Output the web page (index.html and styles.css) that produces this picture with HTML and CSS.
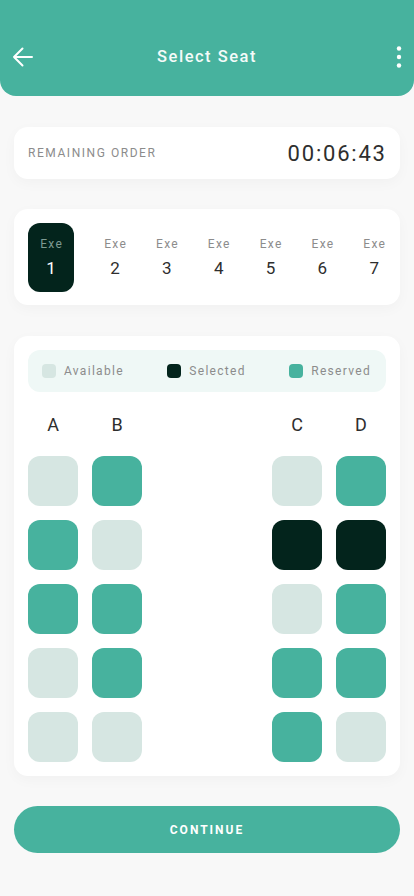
FILE: index.html
```html
<!DOCTYPE html>
<html>
<head>
<meta charset="utf-8">
<link rel="stylesheet" href="styles.css">
</head>
<body>
<div class="app">
  <header class="topbar">
    <svg class="back" width="22" height="22" viewBox="0 0 22 22"><path d="M20 11H2M10.5 2.5L2 11l8.5 8.5" fill="none" stroke="#fff" stroke-width="2" stroke-linecap="round" stroke-linejoin="round"/></svg>
    <h1 class="title">Select Seat</h1>
    <svg class="more" width="6" height="22" viewBox="0 0 6 22"><circle cx="3" cy="2.5" r="2.2" fill="#fff"/><circle cx="3" cy="11" r="2.2" fill="#fff"/><circle cx="3" cy="19.5" r="2.2" fill="#fff"/></svg>
  </header>

  <main class="content">
    <section class="card timer-card">
      <span class="timer-label">REMAINING ORDER</span>
      <span class="timer">00:06:43</span>
    </section>

    <section class="card carriages">
      <div class="car active"><span class="car-label">Exe</span><span class="car-num">1</span></div>
      <div class="car"><span class="car-label">Exe</span><span class="car-num">2</span></div>
      <div class="car"><span class="car-label">Exe</span><span class="car-num">3</span></div>
      <div class="car"><span class="car-label">Exe</span><span class="car-num">4</span></div>
      <div class="car"><span class="car-label">Exe</span><span class="car-num">5</span></div>
      <div class="car"><span class="car-label">Exe</span><span class="car-num">6</span></div>
      <div class="car"><span class="car-label">Exe</span><span class="car-num">7</span></div>
    </section>

    <section class="card seats-card">
      <div class="legend">
        <div class="legend-item"><span class="dot available"></span>Available</div>
        <div class="legend-item"><span class="dot selected"></span>Selected</div>
        <div class="legend-item"><span class="dot reserved"></span>Reserved</div>
      </div>
      <div class="grid">
        <div class="col-label">A</div><div class="col-label">B</div><div></div><div class="col-label">C</div><div class="col-label">D</div>

        <div class="seat available"></div><div class="seat reserved"></div><div></div><div class="seat available"></div><div class="seat reserved"></div>
        <div class="seat reserved"></div><div class="seat available"></div><div></div><div class="seat selected"></div><div class="seat selected"></div>
        <div class="seat reserved"></div><div class="seat reserved"></div><div></div><div class="seat available"></div><div class="seat reserved"></div>
        <div class="seat available"></div><div class="seat reserved"></div><div></div><div class="seat reserved"></div><div class="seat reserved"></div>
        <div class="seat available"></div><div class="seat available"></div><div></div><div class="seat reserved"></div><div class="seat available"></div>
      </div>
    </section>

    <button class="continue">CONTINUE</button>
  </main>
</div>
</body>
</html>
```

FILE: styles.css
```css
* { box-sizing: border-box; }
html, body { margin: 0; padding: 0; }
body {
  background: #f8f8f8;
  font-family: Roboto, "Liberation Sans", sans-serif;
  color: #333;
  width: 414px;
  height: 896px;
  overflow: hidden;
}
.topbar {
  height: 96px;
  background: #47b29e;
  border-radius: 0 0 16px 16px;
  display: flex;
  align-items: center;
  justify-content: space-between;
  padding: 18px 13px 0 12px;
  position: relative;
}
.back { display: block; }
.more { display: block; margin-right: -1px; }
.title {
  margin: 0;
  font-size: 16.5px;
  font-weight: 500;
  color: #f4fbf9;
  letter-spacing: 1.5px;
  position: absolute;
  left: 0; right: 0;
  top: 47px;
  text-align: center;
  line-height: 20px;
  pointer-events: none;
}
.content {
  padding: 31px 14px 0;
  display: flex;
  flex-direction: column;
}
.card {
  background: #fff;
  border-radius: 14px;
  box-shadow: 0 4px 14px rgba(0,0,0,0.03);
}
.timer-card {
  height: 52px;
  display: flex;
  align-items: center;
  justify-content: space-between;
  padding: 0 15px 0 14px;
}
.timer-label {
  font-size: 12px;
  color: #8c8c8c;
  letter-spacing: 1.55px;
}
.timer {
  font-size: 22px;
  color: #2e2e2e;
  letter-spacing: 1.8px;
  margin-right: -1.8px;
}
.carriages {
  margin-top: 30px;
  height: 96px;
  display: flex;
  align-items: center;
  justify-content: space-between;
  padding: 0 14px;
}
.car {
  display: flex;
  flex-direction: column;
  align-items: center;
  gap: 7px;
}
.car-label {
  font-size: 12px;
  color: #8c8c8c;
  letter-spacing: 1.3px;
  margin-right: -1.3px;
  line-height: 14px;
}
.car-num {
  font-size: 17px;
  color: #2e2e2e;
  line-height: 20px;
}
.car:last-child { margin-right: 1px; }
.car.active {
  background: #03241c;
  border-radius: 12px;
  width: 46px;
  height: 69px;
  justify-content: center;
}
.car.active .car-label { color: #7e9a92; }
.car.active .car-num { color: #fff; }
.seats-card {
  margin-top: 31px;
  padding: 14px 14px 14px;
}
.legend {
  background: #eff8f6;
  border-radius: 12px;
  height: 42px;
  display: flex;
  align-items: center;
  justify-content: space-between;
  padding: 0 15px 0 14px;
}
.legend-item {
  display: flex;
  align-items: center;
  gap: 8px;
  font-size: 12px;
  color: #8c8c8c;
  letter-spacing: 1.3px;
}
.dot {
  width: 14px;
  height: 14px;
  border-radius: 4px;
  display: block;
}
.available { background: #d6e6e2; }
.selected { background: #03241c; }
.reserved { background: #47b29e; }
.grid {
  margin-top: 19px;
  display: grid;
  grid-template-columns: 50px 50px 1fr 50px 50px;
  column-gap: 14px;
  row-gap: 14px;
}
.col-label {
  text-align: center;
  font-size: 18px;
  color: #2e2e2e;
  line-height: 28px;
  height: 28px;
  margin-bottom: 3px;
}
.seat {
  height: 50px;
  border-radius: 12px;
}
.continue {
  margin-top: 30px;
  height: 47px;
  border: none;
  border-radius: 24px;
  background: #47b29e;
  color: #fff;
  font-family: Roboto, "Liberation Sans", sans-serif;
  font-size: 12px;
  font-weight: 700;
  letter-spacing: 2px;
}
```
